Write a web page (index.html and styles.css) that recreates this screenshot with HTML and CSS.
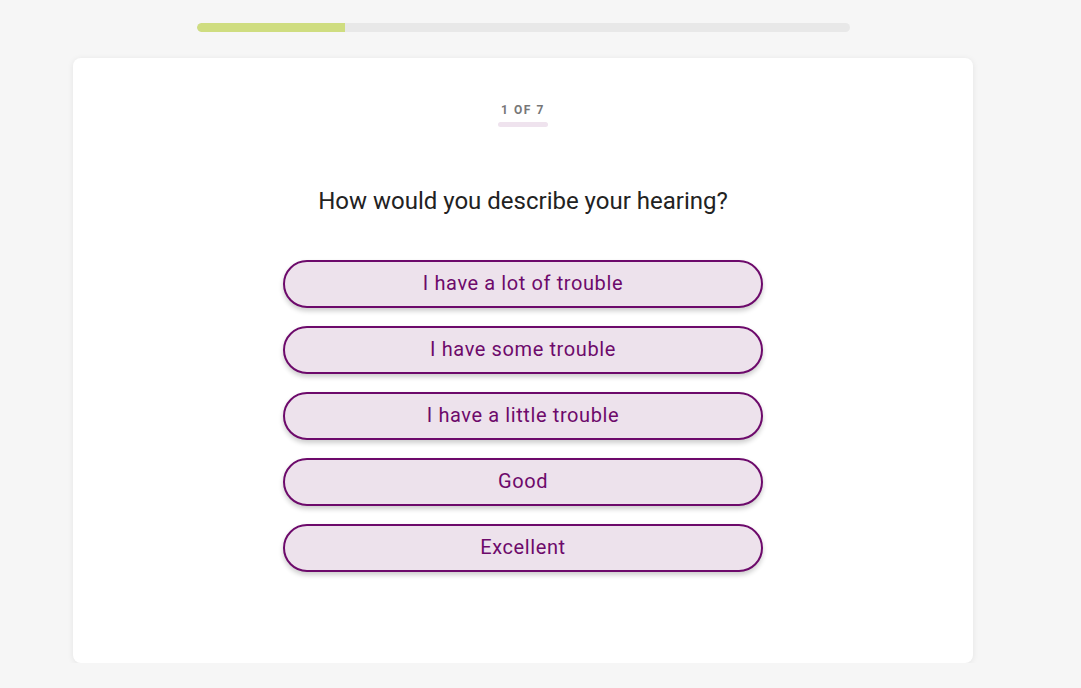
FILE: index.html
```html
<!DOCTYPE html>
<html>
<head>
    <meta charset="UTF-8">
    <title>Hearing Survey</title>
    <link rel="stylesheet" href="styles.css">
</head>
<body>
    <div class="page">
        <div class="progress">
            <div class="progress-fill" style="width: 22.7%"></div>
        </div>

        <div class="card">
            <div class="step">1 OF 7</div>
            <div class="step-bar"></div>

            <h1 class="question">How would you describe your hearing?</h1>

            <div class="answers">
                <button class="answer">I have a lot of trouble</button>
                <button class="answer">I have some trouble</button>
                <button class="answer">I have a little trouble</button>
                <button class="answer">Good</button>
                <button class="answer">Excellent</button>
            </div>
        </div>
    </div>
</body>
</html>
```

FILE: styles.css
```css
body {
    font-family: Roboto, "Liberation Sans", sans-serif;
    margin: 0;
    background-color: #f6f6f6;
    color: #222;
}
.page {
    width: 1046px;
    display: flex;
    flex-direction: column;
    align-items: center;
    padding-top: 23px;
}
.progress {
    width: 653px;
    height: 9px;
    border-radius: 5px;
    background-color: #e8e8e8;
    overflow: hidden;
}
.progress-fill {
    height: 100%;
    background-color: #cfdd80;
    border-radius: 5px 0 0 5px;
}
.card {
    box-sizing: border-box;
    width: 900px;
    height: 605px;
    margin-top: 26px;
    background-color: white;
    border-radius: 8px;
    box-shadow: 0 1px 6px rgba(0, 0, 0, 0.08);
    display: flex;
    flex-direction: column;
    align-items: center;
    padding-top: 44px;
}
.step {
    font-size: 12px;
    font-weight: bold;
    letter-spacing: 1.6px;
    line-height: 16px;
    color: #777;
}
.step-bar {
    width: 50px;
    height: 5px;
    margin-top: 4px;
    border-radius: 3px;
    background-color: #efe3ee;
}
.question {
    font-size: 24px;
    font-weight: normal;
    line-height: 28px;
    margin: 60px 0 0;
    color: #222;
}
.answers {
    display: flex;
    flex-direction: column;
    gap: 18px;
    margin-top: 45px;
}
.answer {
    box-sizing: border-box;
    width: 480px;
    height: 48px;
    padding-bottom: 4px;
    border: 2px solid #6d0a6b;
    border-radius: 24px;
    background-color: #ede2ec;
    color: #6d0a6b;
    font-family: Roboto, "Liberation Sans", sans-serif;
    font-size: 20px;
    letter-spacing: 0.6px;
    cursor: pointer;
    box-shadow: 0 3px 5px rgba(0, 0, 0, 0.2);
}
```
